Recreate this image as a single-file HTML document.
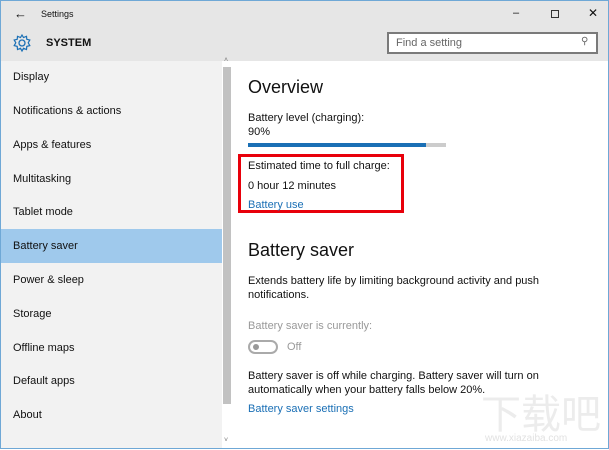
<!DOCTYPE html>
<html><head><style>
*{margin:0;padding:0;box-sizing:border-box}
body{width:609px;height:450px;overflow:hidden;background:#fff;font-family:"Liberation Sans",sans-serif;position:relative}
.win{position:absolute;left:0;top:0;width:609px;height:449px;border:1px solid #6fa8d6;background:#fff;overflow:hidden}
.title{position:absolute;left:0;top:0;width:607px;height:60px;background:#e6e6e6}
.side{position:absolute;left:0;top:60px;width:221px;height:388px;background:#f2f2f2}
.item{position:absolute;left:12px;font-size:11px;color:#111}
.sel{position:absolute;left:0;top:168px;width:221px;height:34px;background:#9fc9ec}
.sb{position:absolute;left:222px;top:66px;width:8px;height:337px;background:#c2c2c2}
.t{position:absolute;font-size:11px;color:#111;white-space:nowrap}
.h{position:absolute;font-size:18px;color:#111}
.link{color:#1a6fb5}
</style></head><body>
<div class="win">
<div class="title">
 <div class="t" style="left:13px;top:5px;font-size:13px">←</div>
 <div class="t" style="left:40px;top:8px;font-size:9px">Settings</div>
 <div class="t" style="left:512px;top:6px;font-size:11px">–</div>
 <div style="position:absolute;left:550px;top:9px;width:8px;height:8px;border:1px solid #333"></div>
 <div class="t" style="left:587px;top:5px;font-size:12px">✕</div>
 <svg style="position:absolute;left:11px;top:32px" width="20" height="20" viewBox="0 0 20 20"><circle cx="10" cy="10" r="3" fill="none" stroke="#1a6fb5" stroke-width="1.3"/><path d="M10 2 L11.5 4.5 L14.5 3.3 L14.8 6.3 L17.8 7 L16.2 9.8 L17.8 12.6 L14.8 13.4 L14.5 16.5 L11.5 15.3 L10 18 L8.5 15.3 L5.5 16.5 L5.2 13.4 L2.2 12.6 L3.8 9.8 L2.2 7 L5.2 6.3 L5.5 3.3 L8.5 4.5 Z" fill="none" stroke="#1a6fb5" stroke-width="1.2"/></svg>
 <div class="t" style="left:45px;top:36px;font-size:11px;font-weight:bold">SYSTEM</div>
 <div style="position:absolute;left:386px;top:31px;width:211px;height:22px;border:2px solid #7a7a7a;background:#fff"></div>
 <div class="t" style="left:395px;top:36px;font-size:11px;color:#666">Find a setting</div>
 <div class="t" style="left:580px;top:35px;font-size:10px;color:#666">⚲</div>
</div>
<div class="side">
 <div class="sel"></div>
 <div class="item" style="top:10px">Display</div>
 <div class="item" style="top:44px">Notifications &amp; actions</div>
 <div class="item" style="top:78px">Apps &amp; features</div>
 <div class="item" style="top:112px">Multitasking</div>
 <div class="item" style="top:145px">Tablet mode</div>
 <div class="item" style="top:179px">Battery saver</div>
 <div class="item" style="top:213px">Power &amp; sleep</div>
 <div class="item" style="top:247px">Storage</div>
 <div class="item" style="top:281px">Offline maps</div>
 <div class="item" style="top:314px">Default apps</div>
 <div class="item" style="top:348px">About</div>
</div>
<div class="sb"></div>
<div class="t" style="left:223px;top:56px;font-size:7px;color:#777">˄</div>
<div class="t" style="left:223px;top:436px;font-size:7px;color:#777">˅</div>
<div class="h" style="left:247px;top:76px">Overview</div>
<div class="t" style="left:247px;top:111px">Battery level (charging):</div>
<div class="t" style="left:247px;top:125px">90%</div>
<div style="position:absolute;left:247px;top:142px;width:198px;height:4px;background:#ccc"><div style="width:178px;height:4px;background:#1a6fb5"></div></div>
<div style="position:absolute;left:237px;top:153px;width:166px;height:59px;border:3px solid #e8000b"></div>
<div class="t" style="left:247px;top:159px">Estimated time to full charge:</div>
<div class="t" style="left:247px;top:179px">0 hour 12 minutes</div>
<div class="t link" style="left:247px;top:198px">Battery use</div>
<div class="h" style="left:247px;top:239px">Battery saver</div>
<div class="t" style="left:247px;top:274px">Extends battery life by limiting background activity and push</div>
<div class="t" style="left:247px;top:288px">notifications.</div>
<div class="t" style="left:247px;top:319px;color:#999">Battery saver is currently:</div>
<div style="position:absolute;left:247px;top:339px;width:30px;height:14px;border:2px solid #aaa;border-radius:7px"><div style="position:absolute;left:3px;top:2px;width:6px;height:6px;border-radius:3px;background:#999"></div></div>
<div class="t" style="left:286px;top:340px;color:#999">Off</div>
<div class="t" style="left:247px;top:369px">Battery saver is off while charging. Battery saver will turn on</div>
<div class="t" style="left:247px;top:383px">automatically when your battery falls below 20%.</div>
<div class="t link" style="left:247px;top:402px">Battery saver settings</div>
<div class="t" style="left:480px;top:388px;font-size:40px;line-height:44px;color:#ececec;font-family:'Noto Sans CJK SC',sans-serif">下载吧</div>
<div class="t" style="left:484px;top:432px;font-size:10px;color:#e2e2e2">www.xiazaiba.com</div>
</div>
</body></html>
